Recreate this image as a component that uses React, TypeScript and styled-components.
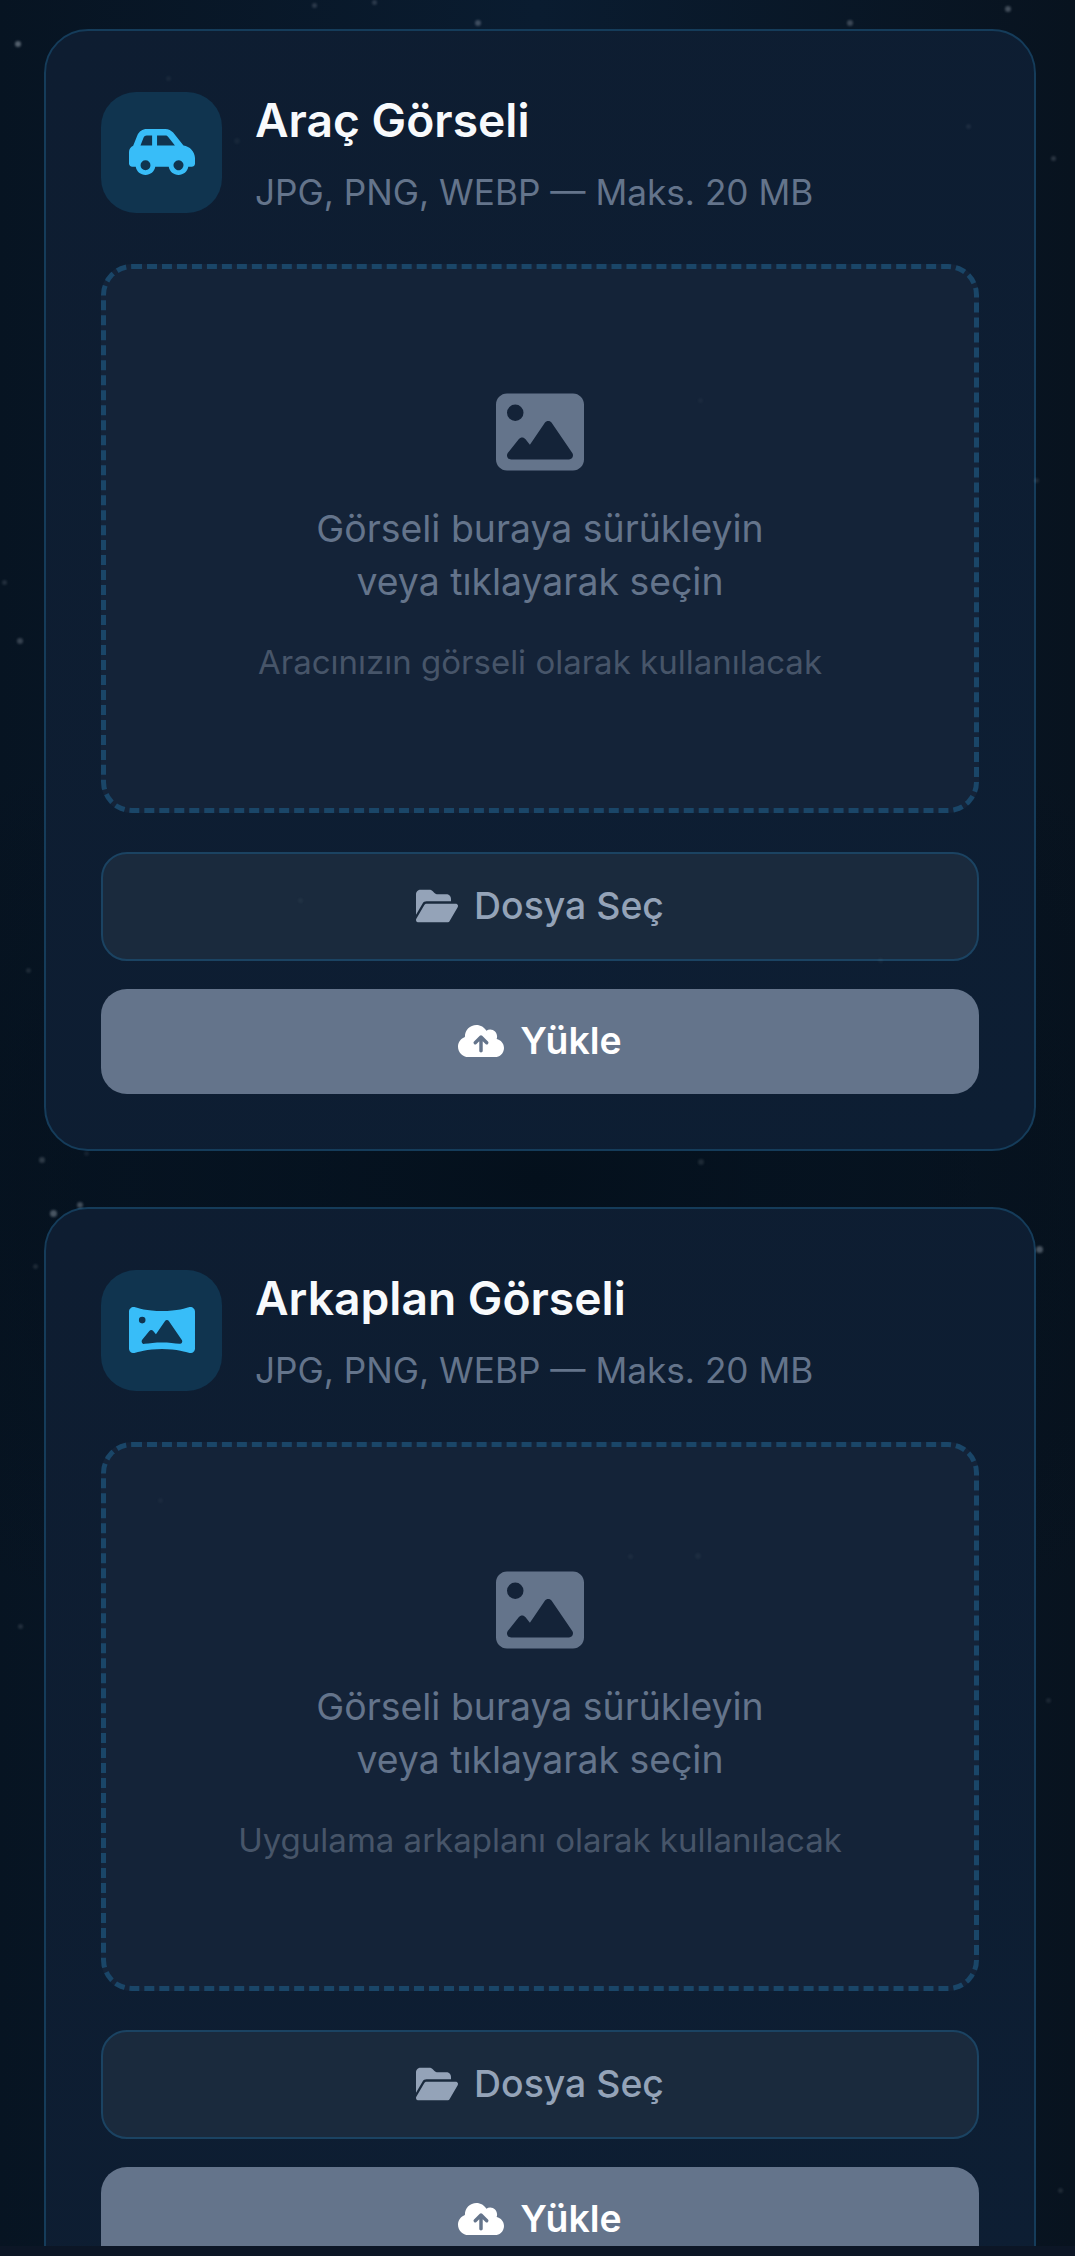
import React from "react";
import styled, { createGlobalStyle } from "styled-components";
import { FaCarSide, FaPanorama, FaImage, FaFolderOpen, FaCloudArrowUp } from "react-icons/fa6";

const Global = createGlobalStyle`
  html, body { margin: 0; padding: 0; background: #0c1626; }
  body { font-family: Inter, "Liberation Sans", sans-serif; }
`;

const Page = styled.main`
  position: relative;
  height: 2246px;
  overflow: hidden;
  box-sizing: border-box;
  padding: 29px 39px 0 44px;
  display: flex;
  flex-direction: column;
  gap: 56px;
  background:
    radial-gradient(ellipse 900px 500px at 50% 1180px, #04101c 0%, rgba(4, 16, 28, 0) 100%),
    linear-gradient(90deg, #071422 0%, #0a1c30 50%, #08131f 100%);
`;

const Stars = styled.div`
  position: absolute;
  inset: 0;
  pointer-events: none;
`;

const Star = styled.span<{ $x: number; $y: number; $s: number; $o: number }>`
  position: absolute;
  left: ${(p) => p.$x}px;
  top: ${(p) => p.$y}px;
  width: ${(p) => p.$s}px;
  height: ${(p) => p.$s}px;
  border-radius: 50%;
  background: rgba(203, 213, 225, ${(p) => p.$o});
  filter: blur(1px);
`;

const Card = styled.section`
  box-sizing: border-box;
  width: 992px;
  flex: none;
  padding: 55px;
  border: 2px solid #153c5a;
  border-radius: 44px;
  background: linear-gradient(135deg, #0e1d31 0%, #0d1e33 100%);
  display: flex;
  flex-direction: column;
`;

const Header = styled.header`
  display: flex;
  align-items: center;
  gap: 33px;
  margin-bottom: 46px;
`;

const IconBox = styled.div`
  width: 121px;
  height: 121px;
  flex: none;
  border-radius: 35px;
  background: #10344f;
  color: #38bdf8;
  display: flex;
  align-items: center;
  justify-content: center;
  font-size: 66px;
`;

const HeadText = styled.div`
  display: flex;
  flex-direction: column;
  gap: 12px;
`;

const Title = styled.h2`
  margin: 0;
  font-size: 46.2px;
  line-height: 68px;
  font-weight: 600;
  color: #f8fafc;
`;

const Sub = styled.p`
  margin: 0;
  font-size: 35.2px;
  line-height: 52px;
  color: #64748b;
`;

const Drop = styled.div`
  box-sizing: border-box;
  height: 549px;
  border: 5px dashed #1a4668;
  border-radius: 31px;
  background: #142338;
  display: flex;
  flex-direction: column;
  align-items: center;
  justify-content: center;
  margin-bottom: 39px;
  color: #64748b;
  text-align: center;
`;

const DropIcon = styled.div`
  font-size: 88px;
  line-height: 0;
  margin-bottom: 27px;
`;

const DropText = styled.p`
  margin: 0 0 31px;
  font-size: 37.4px;
  line-height: 52.5px;
  color: #64748b;
`;

const Hint = styled.p`
  margin: 0 0 4px;
  font-size: 33px;
  line-height: 46px;
  color: #475569;
`;

const Btn = styled.button<{ $primary?: boolean }>`
  box-sizing: border-box;
  width: 100%;
  height: ${(p) => (p.$primary ? 105 : 109)}px;
  margin-bottom: ${(p) => (p.$primary ? 0 : 28)}px;
  padding: 0 0 2px;
  flex: none;
  display: flex;
  align-items: center;
  justify-content: center;
  gap: 16px;
  border-radius: 26px;
  border: ${(p) => (p.$primary ? "none" : "2px solid #1b4362")};
  background: ${(p) => (p.$primary ? "#64748b" : "#1a2a3d")};
  color: ${(p) => (p.$primary ? "#ffffff" : "#94a3b8")};
  font-family: inherit;
  font-size: 37.4px;
  font-weight: ${(p) => (p.$primary ? 600 : 500)};
  svg { font-size: ${(p) => (p.$primary ? 46 : 42)}px; }
`;

const starData: [number, number, number, number][] = [
  [15, 41, 6, 0.4], [475, 20, 6, 0.28], [312, 3, 5, 0.18], [372, 0, 5, 0.18], [1005, 6, 6, 0.3],
  [1051, 156, 5, 0.18], [966, 124, 5, 0.08], [39, 1157, 6, 0.2], [50, 1210, 7, 0.34], [77, 1202, 6, 0.3],
  [84, 1151, 5, 0.08], [33, 1264, 5, 0.12], [1036, 1246, 7, 0.34], [847, 20, 6, 0.26], [698, 1159, 6, 0.12],
  [17, 638, 6, 0.24], [2, 580, 5, 0.14], [166, 76, 5, 0.06], [234, 138, 6, 0.05], [18, 1624, 5, 0.14],
  [1034, 478, 5, 0.12], [26, 968, 5, 0.12], [1046, 1698, 5, 0.1], [1058, 2188, 5, 0.12], [628, 1554, 5, 0.05],
  [695, 1553, 6, 0.05], [698, 398, 5, 0.04], [298, 898, 5, 0.05], [878, 958, 5, 0.05], [158, 1498, 5, 0.04],
];

const StarField = () => (
  <Stars>
    {starData.map(([x, y, s, o]) => (
      <Star key={`${x}-${y}`} $x={x} $y={y} $s={s} $o={o} />
    ))}
  </Stars>
);

const UploadCard = ({ icon, title, hint }: { icon: React.ReactNode; title: string; hint: string }) => (
  <Card>
    <Header>
      <IconBox>{icon}</IconBox>
      <HeadText>
        <Title>{title}</Title>
        <Sub>JPG, PNG, WEBP — Maks. 20 MB</Sub>
      </HeadText>
    </Header>
    <Drop>
      <DropIcon><FaImage /></DropIcon>
      <DropText>Görseli buraya sürükleyin<br />veya tıklayarak seçin</DropText>
      <Hint>{hint}</Hint>
    </Drop>
    <Btn><FaFolderOpen /> Dosya Seç</Btn>
    <Btn $primary><FaCloudArrowUp /> Yükle</Btn>
  </Card>
);

export default function App() {
  return (
    <Page>
      <Global />
      <UploadCard icon={<FaCarSide />} title="Araç Görseli" hint="Aracınızın görseli olarak kullanılacak" />
      <UploadCard icon={<FaPanorama />} title="Arkaplan Görseli" hint="Uygulama arkaplanı olarak kullanılacak" />
      <StarField />
    </Page>
  );
}
